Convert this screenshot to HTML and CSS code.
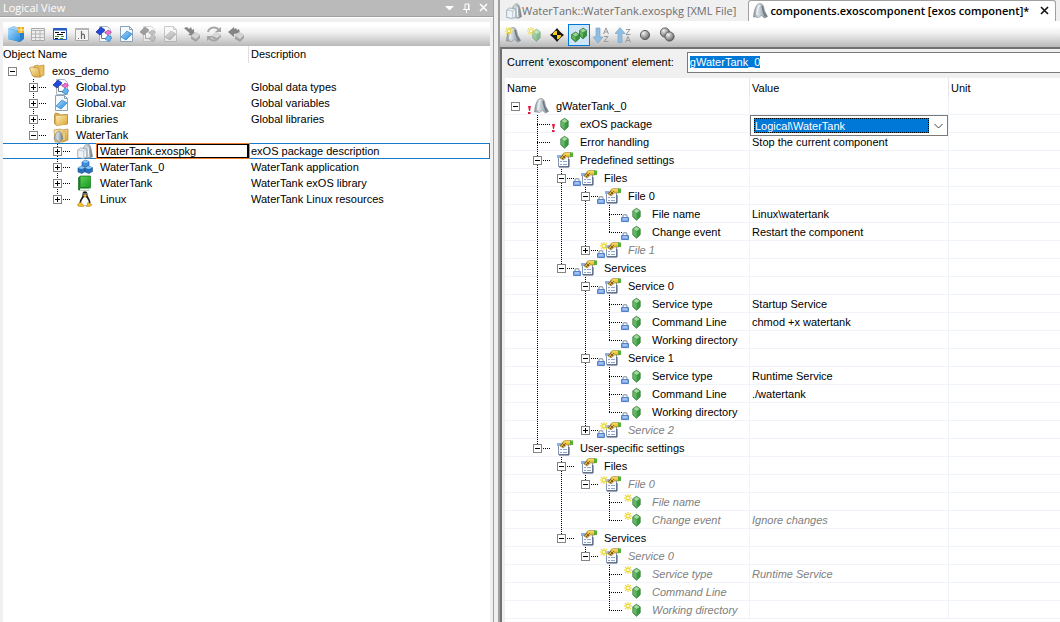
FILE: index.html
```html
<!DOCTYPE html>
<html lang="en">
<head>
<meta charset="utf-8">
<title>Logical View</title>
<link rel="stylesheet" href="styles.css">
</head>
<body>
<svg class="sprite" aria-hidden="true">
  <defs>
    <linearGradient id="gy" x1="0" y1="0" x2="1" y2="1"><stop offset="0" stop-color="#fdeeb4"/><stop offset="1" stop-color="#d9a536"/></linearGradient>
    <linearGradient id="gfin" x1="0" y1="0" x2="1" y2="0"><stop offset="0" stop-color="#8c979e"/><stop offset=".35" stop-color="#d5dce0"/><stop offset=".65" stop-color="#aab5bc"/><stop offset="1" stop-color="#65727b"/></linearGradient>
    <linearGradient id="gblue" x1="0" y1="0" x2="1" y2="1"><stop offset="0" stop-color="#a9dcff"/><stop offset="1" stop-color="#2387d8"/></linearGradient>
    <linearGradient id="ggreen" x1="0" y1="0" x2="1" y2="1"><stop offset="0" stop-color="#5ccf52"/><stop offset="1" stop-color="#199a26"/></linearGradient>
    <linearGradient id="ghand" x1="0" y1="0" x2="0" y2="1"><stop offset="0" stop-color="#fbe06a"/><stop offset="1" stop-color="#cf9413"/></linearGradient>
    <radialGradient id="gball" cx=".35" cy=".3" r=".8"><stop offset="0" stop-color="#f2f2f2"/><stop offset=".5" stop-color="#a3a3a3"/><stop offset="1" stop-color="#555"/></radialGradient>
  </defs>
  <symbol id="folder-open" viewBox="0 0 16 16"><path d="M5 3l4-1 1 1 5-1v10l-4 2H5z" fill="#e9bf62" stroke="#b98a35" stroke-width=".7"/><path d="M.5 5l2-1 7 1 2 9-8-1z" fill="url(#gy)" stroke="#bd9140" stroke-width=".8"/></symbol>
  <symbol id="folder" viewBox="0 0 16 16"><path d="M1.500 4l1-2 4 1 1 1 7-.5v9.500l-11 1.500-2-2z" fill="#e0ad4c" stroke="#b08432" stroke-width=".8"/><path d="M3 5l11-.5v9L3.500 14.500z" fill="url(#gy)"/></symbol>
  <symbol id="fin" viewBox="0 0 16 16"><path d="M1.500 14C2 7 4 1 7.500.5 11.500 0 12 5 12.500 8l3 5.500-3 1.500-3-2.500-3 2-3-.5z" fill="url(#gfin)" stroke="#7b868d" stroke-width=".6"/><path d="M5 12c0-4 .7-8 2.500-9.500" stroke="#eef2f4" stroke-width="1.500" fill="none"/><path d="M10 3l1.500 6 2 4" stroke="#687680" stroke-width="1.300" fill="none"/></symbol>
  <symbol id="folder-fin" viewBox="0 0 16 16"><path d="M1 3l7-1 1 1 6-1v11l-5 2H2z" fill="url(#gy)" stroke="#b98a35" stroke-width=".7"/><path d="M10 5l2-1v9l-2 1z" fill="#f7e3a0" stroke="#b98a35" stroke-width=".5"/><path d="M1 12C2 7 4 4 6 4s3 4 4 8l-2 1-2 3-2-3z" fill="url(#gfin)" stroke="#76868f" stroke-width=".6"/></symbol>
  <symbol id="package" viewBox="0 0 16 16"><path d="M5 14C5 7 7 1 11 .8c3 1 3.500 7 4.500 13l-3 1.500z" fill="url(#gfin)" stroke="#87929a" stroke-width=".6"/><path d="M11 4l1 10" stroke="#fff"/><path d="M.7 7l3-2 6 1v8l-3 1.500-6-1z" fill="#edf3f7" stroke="#93a0aa" stroke-width=".8"/><path d="M.7 7l6 1 3-2M6.700 8v7" fill="none" stroke="#abb8c1" stroke-width=".7"/></symbol>
  <symbol id="types" viewBox="0 0 16 16"><path d="M3.500.5h8l3 3v12h-11z" fill="#f7fbff" stroke="#a6b6c6"/><path d="M7 6h3M5.500 8v4.500H10" fill="none" stroke="#777"/><path d="M0 6l5-5 4 3-5 5z" fill="#2448db" stroke="#152b9a" stroke-width=".7"/><path d="M9 7l3-3 3.500 2-3 3z" fill="#ee70d0" stroke="#b43b9a" stroke-width=".7"/><path d="M9 13l3-4 4 2.500-3 4z" fill="#62b5f2" stroke="#267bc0" stroke-width=".7"/></symbol>
  <symbol id="var" viewBox="0 0 16 16"><path d="M2.500.5h9l3 3v12h-12z" fill="#f5faff" stroke="#8da1b7"/><path d="M11.500.5v3h3" fill="none" stroke="#8da1b7"/><path d="M3 11l6-6 5 3-6 6z" fill="url(#gblue)" stroke="#2b86cc" stroke-width=".7"/></symbol>
  <symbol id="cubes" viewBox="0 0 16 16"><path d="M5 3l3-2 4 1.500v4L9 8 5 7z" fill="#3c8fdc" stroke="#174f91" stroke-width=".6"/><path d="M1 9l3-2 4 1.500v4L5 14.500 1 13zM8 9l3-2 4.500 1.500v4l-3.500 2L8 13z" fill="#276fba" stroke="#174f91" stroke-width=".6"/><path d="M5 3l3-2 4 1.500L9 4zM1 9l3-2 4 1.500L5 10zM8 9l3-2 4.500 1.500L12 10z" fill="#8cc8f6"/></symbol>
  <symbol id="book" viewBox="0 0 16 16"><path d="M1.500 2.500l2-1.500h10v12l-1.500 2H1.500z" fill="#187f26" stroke="#157022" stroke-width=".7"/><path d="M3 13.500h9l1.500-1V14l-1.500 1.300H3z" fill="#e9f5e5"/><path d="M3.500 1.500h10V12H3.500z" fill="url(#ggreen)"/></symbol>
  <symbol id="tux" viewBox="0 0 16 16"><path d="M5.500 3C5.500 1 6.500.3 8 .3s2.500 1 2.500 3c0 3 3 5 3 8.500L12 14.500H4L2.500 12c0-3.500 3-5.500 3-9z" fill="#1c1c1c"/><path d="M8 5.500c1.500 1 4 4 4 7L10 14.500H6l-2-2c0-3 2.500-6 4-7z" fill="#fff"/><path d="M6 4.500L8 3.500l2 1L8 6.500zM.8 13l3-1.800L7 15l-1.500 1-4.700-1zM9.500 15.500l1.200-4 2 .7 2.500 1.800-3.700 2z" fill="#f6bc2c" stroke="#8d620f" stroke-width=".4"/><path d="M6.500 2.300h1v1.200h-1zm2 0h1v1.200h-1z" fill="#fff"/></symbol>
  <symbol id="gem" viewBox="0 0 16 16"><path d="M7.500 2.300l3.700 2.500v6l-3.700 3.500-3.700-3.500v-6z" fill="#3b9b42" stroke="#246e2d" stroke-width=".7"/><path d="M7.500 2.800L4.300 5l3.200 2L10.700 5z" fill="#a3d99d"/><path d="M4.200 5.500L7.500 7.500v6L4.200 10.500z" fill="#67b866"/></symbol>
  <symbol id="group" viewBox="0 0 16 16"><path d="M1.500 4.500h10v10h-10z" fill="#f8fbff" stroke="#8795ae"/><path d="M12 7v8H2" fill="none" stroke="#45516a"/><path d="M0 3h4v3H0z" fill="#8db0e8"/><path d="M3 9.500h2m1 0h4M3 12.500h2m1 0h4" stroke="#8fa5d0"/><path d="M3 6l3-4.500L8 .5h6v4.500H9.500L6 8z" fill="url(#ghand)" stroke="#8a6a18" stroke-width=".5"/><path d="M3.500 5.500l3-3M5 7l4-4M6 4l2 2" stroke="#574522" stroke-width=".7"/><path d="M13 .5h3v4.500h-3z" fill="#5aae35"/></symbol>
  <symbol id="lock" viewBox="0 0 8 8"><path d="M2 4V2.300C2 0 6 0 6 2.300V4" fill="none" stroke="#98a4b2" stroke-width="1.300"/><path d="M.5 3.500h7v4h-7z" fill="#7ca8ea" stroke="#5480c6"/><path d="M2 5h4" stroke="#c4dafa"/></symbol>
  <symbol id="star" viewBox="0 0 8 8"><path d="M4 0v8M0 4h8M1 1l6 6M7 1L1 7" stroke="#ead83c" stroke-width="1.100"/><path d="M3 3h2v2H3z" fill="#fffbd0"/></symbol>
  <symbol id="bang" viewBox="0 0 8 8"><path d="M3 0h3L5 5H4zM3 6h2.500v2H3z" fill="#e3173b"/></symbol>

  <symbol id="cube-new" viewBox="0 0 16 16"><path d="M0 3l5-2.500 11 1.500v11l-4 3L0 13z" fill="#287fca"/><path d="M0 3l5-2.500L16 2l-4 2.500z" fill="#9fd2f6"/><path d="M0 3l12 1.500V16L0 13z" fill="url(#gblue)"/><path d="M10 1h6v6h-6z" fill="#f0a91c"/><path d="M13 1v6M10 4h6" stroke="#fff3a8"/></symbol>
  <symbol id="grid" viewBox="0 0 16 16"><path d="M1.500 2.500h13v12h-13z" fill="#eee" stroke="#a9a9a9"/><path d="M1 4.500h14M1 8h14M1 11.500h14M5.500 5v9M10 5v9" stroke="#b5b5b5"/></symbol>
  <symbol id="code" viewBox="0 0 16 16"><path d="M1.500 2.500h13v11h-13z" fill="#fff" stroke="#285ec4"/><path d="M1 3.500h14" stroke="#285ec4" stroke-width="2"/><path d="M3 6.500h4m2 0h4M5 8.500h6M3 12.500h3" stroke="#111"/><path d="M3 10.500h4m2 0h3M8 12.500h3" stroke="#3e942c"/></symbol>
  <symbol id="header" viewBox="0 0 16 16"><path d="M1.500 2.500h13v12h-13z" fill="#f4f4f4" stroke="#aaa"/><path d="M1 3h14" stroke="#b6b6b6" stroke-width="2"/><path d="M4 12.500h1M7.500 5v8M7.500 9q3-2 3 1v3" fill="none" stroke="#666" stroke-width="1.200"/></symbol>
  <symbol id="arrow-box" viewBox="0 0 16 16"><path d="M0 2l3-1 2 2 2-2 1 3 2-1v7L4 9l2-1.500z" fill="#858585"/><path d="M7 10l4-4 5 3v3l-4 4-5-3z" fill="#a4a4a4"/><path d="M7 10l4-4 5 3-4 4z" fill="#d4d4d4"/></symbol>
  <symbol id="refresh" viewBox="0 0 16 16"><path d="M2 6C3 1 10 0 13 4m0 7c-2 4-7 5-10 1" fill="none" stroke="#a4a4a4" stroke-width="2"/><path d="M15 1v5H9zM1 15v-5h6z" fill="#a4a4a4"/><path d="M6 10l4-4 5 3v2l-4 3-5-2z" fill="#a4a4a4"/><path d="M6 10l4-4 5 3-4 3z" fill="#d8d8d8"/></symbol>
  <symbol id="left-box" viewBox="0 0 16 16"><path d="M0 6l6-5v2l2-1 1 2 2-1 1 4-6 1v3z" fill="#858585"/><path d="M7 10l4-4 5 3v3l-4 4-5-3z" fill="#a4a4a4"/><path d="M7 10l4-4 5 3-4 4z" fill="#d4d4d4"/></symbol>
  <symbol id="new-fin" viewBox="0 0 16 16"><use href="#fin"/><use href="#star" width="8" height="8"/></symbol>
  <symbol id="new-gem" viewBox="0 0 16 16"><use href="#gem" x="2" width="16" height="16" opacity=".55"/><use href="#star" width="8" height="8" opacity=".75"/></symbol>
  <symbol id="target" viewBox="0 0 16 16"><path d="M8 1l2 2.500 2.500 2.500L15 8l-2.500 2-2.500 2.500L8 15l-2-2.500L3.500 10 1 8l2.500-2L6 3.500z" fill="#151515"/><path d="M8 8V3.800A4.200 4.200 0 0 0 3.800 8zM8 8v4.200A4.200 4.200 0 0 0 12.200 8z" fill="#f8ce18"/></symbol>
  <symbol id="gems" viewBox="0 0 16 16"><path d="M4.500 5l4 2.500v4l-4 3.500-4-3.500v-4zM12 1l3.700 2.500v5L12 12 8.500 8.500v-5z" fill="#38933c" stroke="#246329" stroke-width=".6"/><path d="M4.500 5.500l3 2-3 2-3-2zM12 1.500l3 2-3 2-3-2z" fill="#9fd59a"/><path d="M1 8l3.500 2v4L1 11zM9 4l3 2v5L9 8z" fill="#63b35f"/></symbol>
  <symbol id="sort-down" viewBox="0 0 16 16"><path d="M3 1h4v9h3l-5 6-5-6h3z" fill="#90bde0" stroke="#73a2c7" stroke-width=".6"/><path d="M10.500 7L13 1l2.500 6M11.300 5h3.400M11 9.500h4l-4 5h4.500" fill="none" stroke="#999"/></symbol>
  <symbol id="sort-up" viewBox="0 0 16 16"><path d="M3 15.500h4v-9h3L5 .5l-5 6h3z" fill="#90bde0" stroke="#73a2c7" stroke-width=".6"/><path d="M11 2.500h4l-4 5h4.500M10.500 15.500l2.500-6 2.500 6M11.300 13.500h3.400" fill="none" stroke="#999"/></symbol>
  <symbol id="ball" viewBox="0 0 16 16"><circle cx="8" cy="8" r="4.600" fill="url(#gball)" stroke="#555" stroke-width=".9"/></symbol>
  <symbol id="balls" viewBox="0 0 16 16"><circle cx="6" cy="5.500" r="4.600" fill="url(#gball)" stroke="#555" stroke-width=".9"/><circle cx="10.500" cy="9.500" r="4.600" fill="url(#gball)" stroke="#555" stroke-width=".9"/></symbol>
</svg>

<main class="ide">
  <section class="dock">
    <header class="dock-title">
      <h1>Logical View</h1>
      <button aria-label="Options"><svg viewBox="0 0 10 10"><path d="M0 3h9L4.500 7.500z" fill="#fff"/></svg></button>
      <button aria-label="Pin"><svg viewBox="0 0 10 10"><path d="M3 1h4v5M3 1v5M1 6.500h7M4.500 7v3M6.500 1v5" fill="none" stroke="#fff"/></svg></button>
      <button aria-label="Close"><svg viewBox="0 0 10 10"><path d="M1 1l7 7M8 1L1 8" stroke="#fff" stroke-width="1.500"/></svg></button>
    </header>
    <div class="dock-body">
      <div class="toolbar">
        <button aria-label="Add object"><svg><use href="#cube-new"/></svg></button>
        <button aria-label="Table"><svg><use href="#grid"/></svg></button>
        <button aria-label="Source"><svg><use href="#code"/></svg></button>
        <button aria-label="Header file"><svg><use href="#header"/></svg></button>
        <button aria-label="Types"><svg><use href="#types"/></svg></button>
        <button aria-label="Variables"><svg><use href="#var"/></svg></button>
        <button class="off" aria-label="Local types"><svg><use href="#types"/></svg></button>
        <button class="off" aria-label="Local variables"><svg><use href="#var"/></svg></button>
        <button aria-label="Check in"><svg><use href="#arrow-box"/></svg></button>
        <button aria-label="Refresh"><svg><use href="#refresh"/></svg></button>
        <button aria-label="Check out"><svg><use href="#left-box"/></svg></button>
      </div>
      <table class="tree project">
        <colgroup><col class="c-object"><col></colgroup>
        <thead><tr><th>Object Name</th><th>Description</th></tr></thead>
        <tbody>
          <tr><td><div class="node"><span class="g root"><button class="box">−</button></span><span class="ic"><svg><use href="#folder-open"/></svg></span><span>exos_demo</span></div></td><td></td></tr>
          <tr><td><div class="node"><i class="g root"></i><span class="g v h"><button class="box plus">+</button></span><span class="ic"><svg><use href="#types"/></svg></span><span>Global.typ</span></div></td><td>Global data types</td></tr>
          <tr><td><div class="node"><i class="g root"></i><span class="g v h"><button class="box plus">+</button></span><span class="ic"><svg><use href="#var"/></svg></span><span>Global.var</span></div></td><td>Global variables</td></tr>
          <tr><td><div class="node"><i class="g root"></i><span class="g v h"><button class="box plus">+</button></span><span class="ic"><svg><use href="#folder"/></svg></span><span>Libraries</span></div></td><td>Global libraries</td></tr>
          <tr><td><div class="node"><i class="g root"></i><span class="g end h"><button class="box">−</button></span><span class="ic"><svg><use href="#folder-fin"/></svg></span><span>WaterTank</span></div></td><td></td></tr>
          <tr class="current"><td><div class="node"><i class="g root"></i><i class="g"></i><span class="g v h"><button class="box plus">+</button></span><span class="ic"><svg><use href="#package"/></svg></span><span class="focus">WaterTank.exospkg</span></div></td><td>exOS package description</td></tr>
          <tr><td><div class="node"><i class="g root"></i><i class="g"></i><span class="g v h"><button class="box plus">+</button></span><span class="ic"><svg><use href="#cubes"/></svg></span><span>WaterTank_0</span></div></td><td>WaterTank application</td></tr>
          <tr><td><div class="node"><i class="g root"></i><i class="g"></i><span class="g v h"><button class="box plus">+</button></span><span class="ic"><svg><use href="#book"/></svg></span><span>WaterTank</span></div></td><td>WaterTank exOS library</td></tr>
          <tr><td><div class="node"><i class="g root"></i><i class="g"></i><span class="g end h"><button class="box plus">+</button></span><span class="ic"><svg><use href="#tux"/></svg></span><span>Linux</span></div></td><td>WaterTank Linux resources</td></tr>
        </tbody>
      </table>
    </div>
  </section>

  <section class="editor">
    <nav class="tabs">
      <button class="tab"><svg><use href="#package"/></svg><span>WaterTank::WaterTank.exospkg [XML File]</span></button>
      <div class="tab active"><svg><use href="#fin"/></svg><span>components.exoscomponent [exos component]*</span><button class="close" aria-label="Close tab"><svg viewBox="0 0 10 10"><path d="M1 1l7 7M8 1L1 8" stroke="#111" stroke-width="1.600"/></svg></button></div>
    </nav>
    <div class="toolbar">
      <button aria-label="Add component"><svg><use href="#new-fin"/></svg></button>
      <button aria-label="Add element"><svg><use href="#new-gem"/></svg></button>
      <button aria-label="Go to"><svg><use href="#target"/></svg></button>
      <button class="on" aria-label="Show all"><svg><use href="#gems"/></svg></button>
      <button aria-label="Sort ascending"><svg><use href="#sort-down"/></svg></button>
      <button aria-label="Sort descending"><svg><use href="#sort-up"/></svg></button>
      <button aria-label="Single"><svg><use href="#ball"/></svg></button>
      <button aria-label="Multiple"><svg><use href="#balls"/></svg></button>
    </div>
    <div class="editor-body">
      <div class="element-row"><label for="element">Current 'exoscomponent' element:</label><input id="element" type="text" value="gWaterTank_0"></div>
      <table class="tree params">
        <colgroup><col class="c-name"><col class="c-value"><col></colgroup>
        <thead><tr><th>Name</th><th>Value</th><th>Unit</th></tr></thead>
        <tbody>
          <tr><td><div class="node"><span class="g root"><button class="box">−</button></span><span class="ic"><svg class="lo"><use href="#bang"/></svg><svg><use href="#fin"/></svg></span><span>gWaterTank_0</span></div></td><td></td><td></td></tr>
          <tr><td><div class="node"><i class="g root"></i><i class="g v h"></i><span class="ic"><svg class="lo"><use href="#bang"/></svg><svg><use href="#gem"/></svg></span><label for="pkg">exOS package</label></div></td><td class="editing"><div class="combo"><select id="pkg"><option>Logical\WaterTank</option></select><svg viewBox="0 0 10 10"><path d="M.5 3l4 4 4-4" fill="none" stroke="#444"/></svg></div></td><td></td></tr>
          <tr><td><div class="node"><i class="g root"></i><i class="g v h"></i><span class="ic"><svg><use href="#gem"/></svg></span><span>Error handling</span></div></td><td>Stop the current component</td><td></td></tr>
          <tr><td><div class="node"><i class="g root"></i><span class="g v h"><button class="box">−</button></span><span class="ic"><svg><use href="#group"/></svg></span><span>Predefined settings</span></div></td><td></td><td></td></tr>
          <tr><td><div class="node"><i class="g root"></i><i class="g v"></i><span class="g v h"><button class="box">−</button></span><span class="ic"><svg class="lo"><use href="#lock"/></svg><svg><use href="#group"/></svg></span><span>Files</span></div></td><td></td><td></td></tr>
          <tr><td><div class="node"><i class="g root"></i><i class="g v"></i><i class="g v"></i><span class="g v h"><button class="box">−</button></span><span class="ic"><svg class="lo"><use href="#lock"/></svg><svg><use href="#group"/></svg></span><span>File 0</span></div></td><td></td><td></td></tr>
          <tr><td><div class="node"><i class="g root"></i><i class="g v"></i><i class="g v"></i><i class="g v"></i><i class="g v h"></i><span class="ic"><svg class="lo"><use href="#lock"/></svg><svg><use href="#gem"/></svg></span><span>File name</span></div></td><td>Linux\watertank</td><td></td></tr>
          <tr><td><div class="node"><i class="g root"></i><i class="g v"></i><i class="g v"></i><i class="g v"></i><i class="g end h"></i><span class="ic"><svg class="lo"><use href="#lock"/></svg><svg><use href="#gem"/></svg></span><span>Change event</span></div></td><td>Restart the component</td><td></td></tr>
          <tr class="ghost"><td><div class="node"><i class="g root"></i><i class="g v"></i><i class="g v"></i><span class="g end h"><button class="box plus">+</button></span><span class="ic"><svg class="lo"><use href="#lock"/></svg><svg><use href="#group"/></svg><svg class="hi"><use href="#star"/></svg></span><span>File 1</span></div></td><td></td><td></td></tr>
          <tr><td><div class="node"><i class="g root"></i><i class="g v"></i><span class="g end h"><button class="box">−</button></span><span class="ic"><svg class="lo"><use href="#lock"/></svg><svg><use href="#group"/></svg></span><span>Services</span></div></td><td></td><td></td></tr>
          <tr><td><div class="node"><i class="g root"></i><i class="g v"></i><i class="g"></i><span class="g v h"><button class="box">−</button></span><span class="ic"><svg class="lo"><use href="#lock"/></svg><svg><use href="#group"/></svg></span><span>Service 0</span></div></td><td></td><td></td></tr>
          <tr><td><div class="node"><i class="g root"></i><i class="g v"></i><i class="g"></i><i class="g v"></i><i class="g v h"></i><span class="ic"><svg class="lo"><use href="#lock"/></svg><svg><use href="#gem"/></svg></span><span>Service type</span></div></td><td>Startup Service</td><td></td></tr>
          <tr><td><div class="node"><i class="g root"></i><i class="g v"></i><i class="g"></i><i class="g v"></i><i class="g v h"></i><span class="ic"><svg class="lo"><use href="#lock"/></svg><svg><use href="#gem"/></svg></span><span>Command Line</span></div></td><td>chmod +x watertank</td><td></td></tr>
          <tr><td><div class="node"><i class="g root"></i><i class="g v"></i><i class="g"></i><i class="g v"></i><i class="g end h"></i><span class="ic"><svg class="lo"><use href="#lock"/></svg><svg><use href="#gem"/></svg></span><span>Working directory</span></div></td><td></td><td></td></tr>
          <tr><td><div class="node"><i class="g root"></i><i class="g v"></i><i class="g"></i><span class="g v h"><button class="box">−</button></span><span class="ic"><svg class="lo"><use href="#lock"/></svg><svg><use href="#group"/></svg></span><span>Service 1</span></div></td><td></td><td></td></tr>
          <tr><td><div class="node"><i class="g root"></i><i class="g v"></i><i class="g"></i><i class="g v"></i><i class="g v h"></i><span class="ic"><svg class="lo"><use href="#lock"/></svg><svg><use href="#gem"/></svg></span><span>Service type</span></div></td><td>Runtime Service</td><td></td></tr>
          <tr><td><div class="node"><i class="g root"></i><i class="g v"></i><i class="g"></i><i class="g v"></i><i class="g v h"></i><span class="ic"><svg class="lo"><use href="#lock"/></svg><svg><use href="#gem"/></svg></span><span>Command Line</span></div></td><td>./watertank</td><td></td></tr>
          <tr><td><div class="node"><i class="g root"></i><i class="g v"></i><i class="g"></i><i class="g v"></i><i class="g end h"></i><span class="ic"><svg class="lo"><use href="#lock"/></svg><svg><use href="#gem"/></svg></span><span>Working directory</span></div></td><td></td><td></td></tr>
          <tr class="ghost"><td><div class="node"><i class="g root"></i><i class="g v"></i><i class="g"></i><span class="g end h"><button class="box plus">+</button></span><span class="ic"><svg class="lo"><use href="#lock"/></svg><svg><use href="#group"/></svg><svg class="hi"><use href="#star"/></svg></span><span>Service 2</span></div></td><td></td><td></td></tr>
          <tr><td><div class="node"><i class="g root"></i><span class="g end h"><button class="box">−</button></span><span class="ic"><svg><use href="#group"/></svg></span><span>User-specific settings</span></div></td><td></td><td></td></tr>
          <tr><td><div class="node"><i class="g root"></i><i class="g"></i><span class="g v h"><button class="box">−</button></span><span class="ic"><svg><use href="#group"/></svg></span><span>Files</span></div></td><td></td><td></td></tr>
          <tr class="ghost"><td><div class="node"><i class="g root"></i><i class="g"></i><i class="g v"></i><span class="g end h"><button class="box">−</button></span><span class="ic"><svg><use href="#group"/></svg><svg class="hi"><use href="#star"/></svg></span><span>File 0</span></div></td><td></td><td></td></tr>
          <tr class="ghost"><td><div class="node"><i class="g root"></i><i class="g"></i><i class="g v"></i><i class="g"></i><i class="g v h"></i><span class="ic"><svg><use href="#gem"/></svg><svg class="hi"><use href="#star"/></svg></span><span>File name</span></div></td><td></td><td></td></tr>
          <tr class="ghost"><td><div class="node"><i class="g root"></i><i class="g"></i><i class="g v"></i><i class="g"></i><i class="g end h"></i><span class="ic"><svg><use href="#gem"/></svg><svg class="hi"><use href="#star"/></svg></span><span>Change event</span></div></td><td>Ignore changes</td><td></td></tr>
          <tr><td><div class="node"><i class="g root"></i><i class="g"></i><span class="g end h"><button class="box">−</button></span><span class="ic"><svg><use href="#group"/></svg></span><span>Services</span></div></td><td></td><td></td></tr>
          <tr class="ghost"><td><div class="node"><i class="g root"></i><i class="g"></i><i class="g"></i><span class="g end h"><button class="box">−</button></span><span class="ic"><svg><use href="#group"/></svg><svg class="hi"><use href="#star"/></svg></span><span>Service 0</span></div></td><td></td><td></td></tr>
          <tr class="ghost"><td><div class="node"><i class="g root"></i><i class="g"></i><i class="g"></i><i class="g"></i><i class="g v h"></i><span class="ic"><svg><use href="#gem"/></svg><svg class="hi"><use href="#star"/></svg></span><span>Service type</span></div></td><td>Runtime Service</td><td></td></tr>
          <tr class="ghost"><td><div class="node"><i class="g root"></i><i class="g"></i><i class="g"></i><i class="g"></i><i class="g v h"></i><span class="ic"><svg><use href="#gem"/></svg><svg class="hi"><use href="#star"/></svg></span><span>Command Line</span></div></td><td></td><td></td></tr>
          <tr class="ghost"><td><div class="node"><i class="g root"></i><i class="g"></i><i class="g"></i><i class="g"></i><i class="g end h"></i><span class="ic"><svg><use href="#gem"/></svg><svg class="hi"><use href="#star"/></svg></span><span>Working directory</span></div></td><td></td><td></td></tr>
        </tbody>
      </table>
    </div>
  </section>
</main>
<script src="app.js"></script>
</body>
</html>
```

FILE: styles.css
```css
* { box-sizing: border-box; }
body {
  margin: 0;
  font: 11px/14px "Liberation Sans", Arial, sans-serif;
  color: #000;
  background: #f0f0f0;
}
button, input, select { font: inherit; color: inherit; margin: 0; padding: 0; border: 0; background: none; }
.sprite { position: absolute; width: 0; height: 0; }

.ide { display: flex; min-height: 100vh; overflow: hidden; }

/* docked project view */
.dock { flex: 0 0 494px; display: flex; flex-direction: column; border-right: 1px solid #a0a0a0; }
.dock-title {
  display: flex; align-items: center; height: 17px; padding: 0 4px 0 3px; gap: 7px;
  background: #bababa; border-bottom: 1px solid #a0a0a0; color: #fff;
}
.dock-title h1 { flex: 1; margin: 0; font: 11px/16px "Open Sans", sans-serif; }
.dock-title button { display: flex; }
.dock-title svg { width: 10px; height: 10px; }
.dock-body { flex: 1; display: flex; flex-direction: column; padding: 4px 3px 0; border-top: 1px solid #fff; }
.dock-body .project { background: #fff; }
.dock-body::after { content: ""; flex: 1; background: #fff; }

.toolbar { display: flex; align-items: center; height: 24px; padding: 0 2px; background: linear-gradient(#fff 15%, #f0f0f0 45%, #b8b8b8); }
.toolbar button { display: flex; align-items: center; justify-content: center; width: 22px; height: 22px; }
.toolbar svg { width: 16px; height: 16px; }
.toolbar .off { filter: grayscale(1); opacity: .5; }
.toolbar .on { border: 1px solid #0078d7; background: #cfe6f8; }

/* tree tables */
.tree { width: 100%; border-collapse: separate; border-spacing: 0; table-layout: fixed; }
.tree th, .tree td { padding: 0 0 0 2px; text-align: left; font-weight: normal; white-space: nowrap; }
.tree td:first-child { padding: 0; }
.c-object { width: 246px; }
.project th { height: 17px; padding-bottom: 2px; }
.project th:first-child { padding-left: 0; border-right: 1px solid #e0e0e0; }
.project td { height: 16px; }
.node { display: flex; align-items: center; height: 16px; }
.g {
  flex: none; display: flex; align-items: center; justify-content: center;
  width: 24px; height: 100%; position: relative;
}
.g.root { width: 18px; }
.g.v::before, .g.end::before {
  content: ""; position: absolute; left: 12px; top: 0; width: 1px; height: 100%;
  background: repeating-linear-gradient(#000 0 1px, transparent 1px 2px);
}
.g.end::before { height: 50%; }
.g.h::after {
  content: ""; position: absolute; left: 12px; top: 50%; width: 14px; height: 1px;
  background: repeating-linear-gradient(90deg, #000 0 1px, transparent 1px 2px);
}
.box {
  position: relative; z-index: 1; width: 9px; height: 9px;
  border: 1px solid #848484; color: transparent; font-size: 1px; overflow: hidden;
  background: linear-gradient(#000, #000) center / 5px 1px no-repeat #fff;
}
.box.plus {
  background: linear-gradient(#000, #000) center / 5px 1px no-repeat,
    linear-gradient(#000, #000) center / 1px 5px no-repeat #fff;
}
.ic { position: relative; flex: none; display: flex; justify-content: flex-end; width: 24px; margin-right: 7px; }
.ic svg { width: 16px; height: 16px; }
.ic .lo { position: absolute; left: 0; bottom: 0; width: 8px; height: 8px; }
.ic .hi { position: absolute; left: 3px; top: 0; width: 8px; height: 8px; }

.current td { border-top: 1px solid #1979ca; border-bottom: 1px solid #1979ca; }
.current td:last-child { border-right: 1px solid #1979ca; }
.current .node { height: 14px; }
.current .ic { margin-right: 4px; }
.focus {
  flex: 1; align-self: stretch; line-height: 12px; padding-left: 2px;
  border: solid #000; border-width: 1px 2px 1px 1px; outline: 1px solid #f08030;
}

/* editor */
.editor { flex: 1; min-width: 0; display: flex; flex-direction: column; margin-left: 4px; border-left: 2px solid #a0a0a0; }
.tabs { display: flex; height: 22px; font: 11px/20px "Open Sans", sans-serif; color: #6d6d6d; white-space: nowrap; border-bottom: 1px solid #fff; }
.tab { display: flex; align-items: center; height: 21px; padding: 0 12px 0 6px; }
.tab > svg { width: 16px; height: 16px; flex: none; }
.tab.active { gap: 2px; padding: 0 5px 0 3px; color: #000; font-weight: 600; background: #fff; border: 1px solid #a0a0a0; border-bottom: 0; border-radius: 3px 3px 0 0; }
.close { display: flex; margin-left: 9px; }
.close svg { width: 10px; height: 10px; }
.editor .toolbar { height: 25px; }
.editor-body { flex: 1; border: solid #707070; border-width: 2px 0 0 2px; padding-left: 3px; background: linear-gradient(90deg, #f0f0f0 3px, #fff 3px); }
.element-row { display: flex; align-items: center; height: 29px; gap: 13px; padding: 3px 0 6px 2px; background: #f0f0f0; }
.element-row input { flex: 1; min-width: 0; height: 21px; padding: 0 2px; border: 1px solid #7a7a7a; border-right: 0; background: #fff; outline: 0; }
.element-row input::selection { background: #0078d7; color: #fff; }

.c-name { width: 245px; }
.c-value { width: 199px; }
.params th { height: 19px; border-right: 1px solid #e5e5e5; }
.params td { height: 18px; border: solid #f0f4fa; border-width: 0 1px 1px 0; }
.params th:last-child, .params td:last-child { border-right: 0; }
.params .node { height: 18px; margin-bottom: -1px; }
.params .g.root { width: 20px; }
.ghost { color: #808080; font-style: italic; }
.editing { position: relative; }
.combo { position: absolute; z-index: 2; left: 0; top: 0; width: 100%; height: 21px; background: #fff; border: 1px solid #7a7a7a; padding: 2px 18px 2px 3px; display: flex; }
.combo select { width: 100%; appearance: none; background: #0078d7; color: #fff; outline: 1px dotted #000; outline-offset: -1px; padding-left: 1px; }
.combo svg { position: absolute; right: 3px; top: 5px; width: 10px; height: 10px; pointer-events: none; }
```

FILE: app.js
```js
const element = document.getElementById("element");
element.focus();
element.select();
```
